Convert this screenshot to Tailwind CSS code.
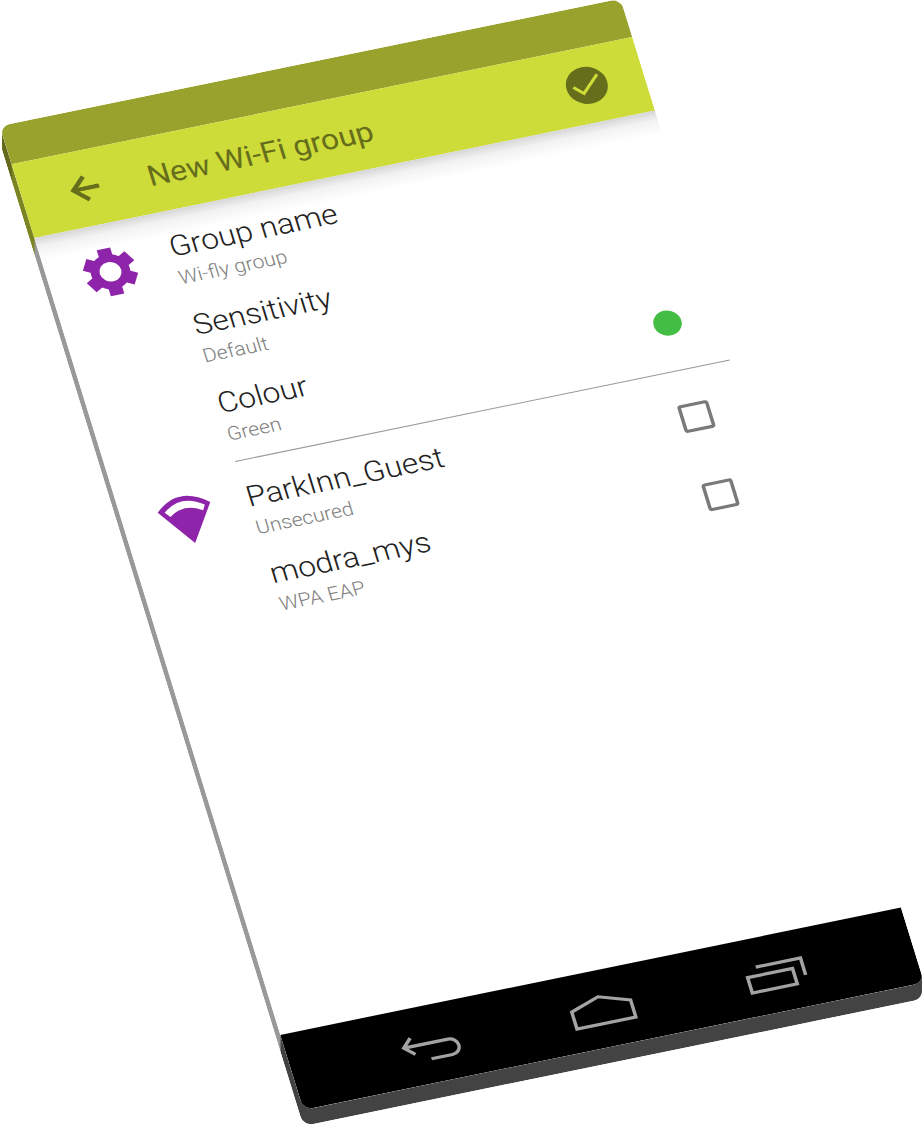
<!DOCTYPE html>
<html lang="en">
<head>
<meta charset="utf-8">
<title>New Wi-Fi group</title>
<script src="https://cdn.jsdelivr.net/npm/@tailwindcss/browser@4"></script>
</head>
<body class="bg-white">
<div class="relative h-[1125px] w-[923px] overflow-hidden bg-white font-['Roboto',sans-serif]">
  <!-- side of the tilted phone: one slice per pixel of thickness -->
  <div id="side">
    <div class="absolute left-0 top-0 flex h-[642px] w-[361px] origin-top-left flex-col overflow-hidden rounded-[6px] [transform:matrix(1.7194,-0.3528,0.4731,1.5327,-0.3,142)]">
      <div class="h-[25px] bg-[#656b1c]"></div><div class="h-12 bg-[#7d8624]"></div><div class="flex-1 bg-linear-to-r from-[#999] from-50% to-white to-50%"></div><div class="h-[49px] bg-[#444]"></div>
    </div>
  </div>

  <!-- screen -->
  <div class="absolute left-0 top-0 flex h-[642px] w-[361px] origin-top-left flex-col overflow-hidden rounded-[6px] bg-white [transform:matrix(1.7194,-0.3528,0.4731,1.5327,-0.3,126)]">
    <div class="h-[25px] shrink-0 bg-[#99a22d]"></div>
    <header class="flex h-12 shrink-0 items-center bg-[#cddc39] pr-[20.6px] text-[#666e1c]">
      <div class="flex w-[72.4px] justify-center">
        <svg class="size-6" viewBox="0 0 24 24" fill="currentColor" stroke="currentColor" stroke-width=".6"><path d="M20 11H7.83l5.59-5.59L12 4l-8 8 8 8 1.41-1.41L7.83 13H20v-2z"/></svg>
      </div>
      <h1 class="mt-px flex-1 text-[18px] leading-6">New Wi-Fi group</h1>
      <svg class="size-6" viewBox="0 0 24 24"><circle cx="12" cy="12" r="11.8" fill="currentColor"/><path d="M4.3 11.6l4.8 5 10.3-10.2" fill="none" stroke="#cddc39" stroke-width="1.8"/></svg>
    </header>
    <main class="flex-1 bg-linear-to-b from-[#d6d6d6] via-[#f2f2f2] via-[6px] to-white to-[15px] pl-[.4px] pt-[5.5px]">
      <section>
        <div class="flex h-[50.5px] items-center">
          <div class="flex w-[72px] justify-center">
            <svg class="size-[38px]" viewBox="-19 -18.4 38 38" fill="#8e24aa"><circle r="11.2"/><path id="tooth" d="M-3.9-15H3.9V15H-3.9Z"/><path d="M-3.9-15H3.9V15H-3.9Z" transform="rotate(60)"/><path d="M-3.9-15H3.9V15H-3.9Z" transform="rotate(120)"/><circle r="6.2" fill="#fff"/></svg>
          </div>
          <div class="mt-[1.2px] flex-1"><p class="text-[18px] font-light leading-6 text-[#212121]">Group name</p><p class="text-[12px] font-light leading-4 text-[#808080]">Wi-fly group</p></div>
        </div>
        <div class="flex h-[50.5px] items-center pl-[72px]">
          <div class="mt-[1.8px] flex-1"><p class="text-[18px] font-light leading-6 text-[#212121]">Sensitivity</p><p class="text-[12px] font-light leading-4 text-[#808080]">Default</p></div>
        </div>
        <div class="flex h-[50.5px] items-center pl-[72px] pr-[20.6px]">
          <div class="mt-[1.8px] flex-1"><p class="text-[18px] font-light leading-6 text-[#212121]">Colour</p><p class="text-[12px] font-light leading-4 text-[#808080]">Green</p></div>
          <div class="size-4 rounded-full bg-[#43bd43]"></div>
        </div>
      </section>
      <svg class="ml-[72px] block h-[10.7px] w-[288px]" viewBox="0 0 288 10.7"><path d="M0 5.5H288" stroke="#999" stroke-width=".65"/></svg>
      <section>
        <div class="flex h-[50.5px] items-center pr-[19.6px]">
          <div class="flex w-[72px] justify-center">
            <svg class="size-[31px]" viewBox="0 0 30 30"><path d="M.1 7Q15-7 29.7 7L15 29.5Z" fill="#8e24aa"/><path d="M3.8 7.8Q15-1.5 26.4 7.8L24.6 11Q15 4.4 6.2 11Z" fill="#fff"/></svg>
          </div>
          <div class="mt-[2px] flex-1"><p class="text-[18px] font-light leading-6 text-[#212121]">ParkInn_Guest</p><p class="text-[12px] font-light leading-4 text-[#808080]">Unsecured</p></div>
          <div class="size-[18px] rounded-[2px] border-2 border-[#7a7a7a]"></div>
        </div>
        <div class="flex h-[50.5px] items-center pl-[72px] pr-[19.6px]">
          <div class="mt-[2px] flex-1"><p class="text-[18px] font-light leading-6 text-[#212121]">modra_mys</p><p class="text-[12px] font-light leading-4 text-[#808080]">WPA EAP</p></div>
          <div class="mt-px size-[18px] rounded-[2px] border-2 border-[#7a7a7a]"></div>
        </div>
      </section>
    </main>
    <nav class="h-[49px] shrink-0 bg-black">
      <svg class="block h-12 w-[360px]" viewBox="0 592 360 48" fill="none" stroke="#a3a3a3" stroke-width="2">
        <path d="M65.5 615.7H91a5 5 0 0 1 0 10H78.7M70.5 610.3L65.3 615.7L70.7 621"/>
        <path d="M163.3 614.7L180.2 608.6L197.5 614.7V625.8H163.3Z"/>
        <path d="M265.3 615.7H291.4V625.8H265.3ZM271.5 610.3H297.5V621.3"/>
      </svg>
    </nav>
  </div>
</div>
<script>
  const side = document.getElementById('side');
  const slice = side.firstElementChild;
  for (let d = 15; d > 0; d--) {
    const s = slice.cloneNode(true);
    s.style.transform = `matrix(1.7194,-0.3528,0.4731,1.5327,-0.3,${126 + d})`;
    side.appendChild(s);
  }
</script>
</body>
</html>
